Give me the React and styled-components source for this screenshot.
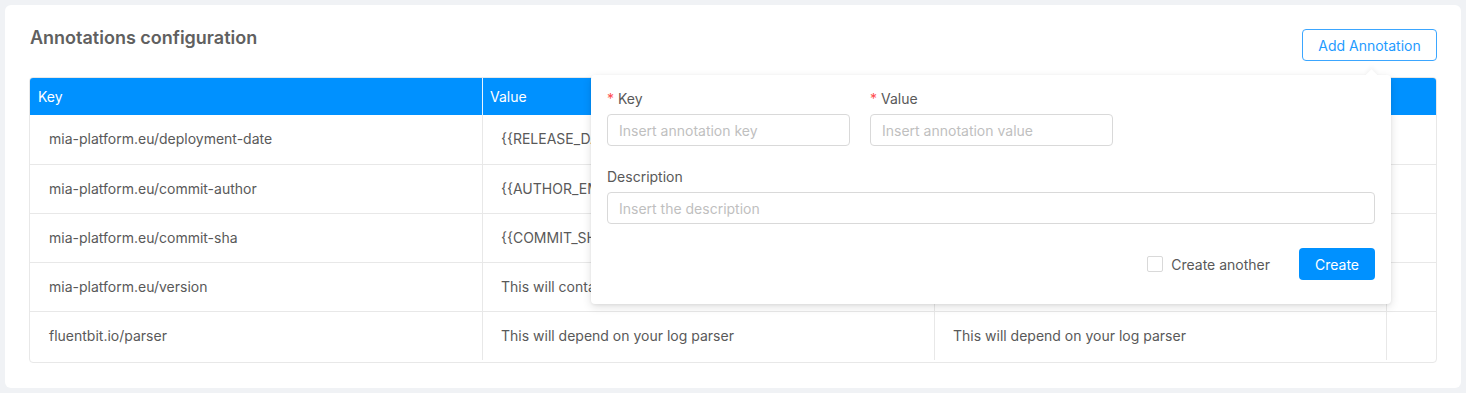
import React from "react";
import styled, { createGlobalStyle } from "styled-components";

const GlobalStyle = createGlobalStyle`
  body {
    margin: 0;
    background: #f0f2f5;
    font-family: "Inter", "Noto Sans", sans-serif;
    font-size: 14px;
    color: #595959;
  }
  * { box-sizing: border-box; }
`;

const rows = [
  { key: "mia-platform.eu/deployment-date", value: "{{RELEASE_DATE}}", desc: "" },
  { key: "mia-platform.eu/commit-author", value: "{{AUTHOR_EMAIL}}", desc: "" },
  { key: "mia-platform.eu/commit-sha", value: "{{COMMIT_SHA}}", desc: "" },
  { key: "mia-platform.eu/version", value: "This will contain the version", desc: "" },
  {
    key: "fluentbit.io/parser",
    value: "This will depend on your log parser",
    desc: "This will depend on your log parser",
  },
];

const App = () => {
  return (
    <Page>
      <GlobalStyle />
      <Card>
        <TopBar>
          <Title>Annotations configuration</Title>
          <ButtonWrap>
            <OutlineButton>Add Annotation</OutlineButton>
            <Popover>
              <Arrow />
              <FieldRow>
                <Field>
                  <Label>
                    <Req>*</Req>Key
                  </Label>
                  <Input placeholder="Insert annotation key" />
                </Field>
                <Field>
                  <Label>
                    <Req>*</Req>Value
                  </Label>
                  <Input placeholder="Insert annotation value" />
                </Field>
              </FieldRow>
              <Field $wide>
                <Label>Description</Label>
                <Input placeholder="Insert the description" />
              </Field>
              <Footer>
                <CheckLabel>
                  <Box />
                  Create another
                </CheckLabel>
                <PrimaryButton>Create</PrimaryButton>
              </Footer>
            </Popover>
          </ButtonWrap>
        </TopBar>
        <Table>
          <HeadRow>
            <HeadCell>Key</HeadCell>
            <HeadCell>Value</HeadCell>
            <HeadCell>Description</HeadCell>
            <HeadCell />
          </HeadRow>
          {rows.map((r) => (
            <BodyRow key={r.key}>
              <Cell>{r.key}</Cell>
              <Cell>{r.value}</Cell>
              <Cell>{r.desc}</Cell>
              <Cell />
            </BodyRow>
          ))}
        </Table>
      </Card>
    </Page>
  );
};

const Page = styled.div`
  padding: 5px;
  width: 1466px;
  height: 393px;
`;

const Card = styled.div`
  background: #fff;
  border-radius: 6px;
  padding: 24px 24px 0 24px;
  height: 383px;
`;

const TopBar = styled.div`
  display: flex;
  justify-content: space-between;
  align-items: flex-start;
  margin-bottom: 16px;
  padding-left: 1px;
`;

const Title = styled.h2`
  margin: 0;
  font-size: 18px;
  font-weight: 600;
  line-height: 18px;
  color: #606060;
`;

const ButtonWrap = styled.div`
  position: relative;
`;

const OutlineButton = styled.button`
  display: block;
  height: 32px;
  width: 135px;
  padding: 0;
  border: 1px solid #3ba6ff;
  border-radius: 4px;
  background: #fff;
  color: #1f9bff;
  font-family: inherit;
  font-size: 14px;
`;

const Popover = styled.div`
  position: absolute;
  top: 46px;
  right: 46px;
  width: 800px;
  height: 229px;
  background: #fff;
  border-radius: 4px;
  box-shadow: 0 3px 10px rgba(0, 0, 0, 0.12), 0 1px 3px rgba(0, 0, 0, 0.06);
  padding: 14px 16px 16px 16px;
  z-index: 10;
`;

const Arrow = styled.div`
  position: absolute;
  top: -4px;
  right: 15px;
  width: 9px;
  height: 9px;
  background: #fff;
  transform: rotate(45deg);
  box-shadow: -2px -2px 4px rgba(0, 0, 0, 0.04);
`;

const FieldRow = styled.div`
  display: flex;
  gap: 20px;
  margin-bottom: 21px;
`;

const Field = styled.div`
  display: flex;
  flex-direction: column;
  gap: 5px;
  width: ${(p) => (p.$wide ? "100%" : "243px")};
`;

const Label = styled.label`
  font-size: 14px;
  line-height: 20px;
  color: #595959;
`;

const Req = styled.span`
  color: #ff4d4f;
  margin-right: 4px;
`;

const Input = styled.input`
  height: 32px;
  width: 100%;
  border: 1px solid #d9d9d9;
  border-radius: 4px;
  padding: 0 11px;
  font-family: inherit;
  font-size: 14px;
  color: #595959;
  outline: none;

  &::placeholder {
    color: #bfbfbf;
  }
`;

const Footer = styled.div`
  display: flex;
  justify-content: flex-end;
  align-items: center;
  gap: 29px;
  margin-top: 24px;
`;

const CheckLabel = styled.label`
  display: flex;
  align-items: center;
  gap: 8px;
  font-size: 14px;
  color: #595959;
`;

const Box = styled.span`
  width: 16px;
  height: 16px;
  border: 1px solid #d9d9d9;
  border-radius: 2px;
  background: #fff;
`;

const PrimaryButton = styled.button`
  height: 32px;
  width: 76px;
  border: none;
  border-radius: 4px;
  background: #0091ff;
  color: #fff;
  font-family: inherit;
  font-size: 14px;
`;

const Table = styled.div`
  border: 1px solid #e8e8e8;
  border-radius: 4px;
  overflow: hidden;
  padding-bottom: 2px;
`;

const grid = `
  display: grid;
  grid-template-columns: 452px 452px 452px 1fr;
`;

const HeadRow = styled.div`
  ${grid}
  background: #0091ff;
  height: 37px;
`;

const HeadCell = styled.div`
  color: #fff;
  line-height: 37px;
  padding-left: 7px;
  border-left: 1px solid #e8f4ff;

  &:first-child {
    border-left: none;
    padding-left: 8px;
  }
`;

const BodyRow = styled.div`
  ${grid}
  height: 49px;
  border-top: 1px solid #e8e8e8;

  &:nth-child(2) {
    border-top: none;
  }
`;

const Cell = styled.div`
  padding-left: 18px;
  line-height: 48px;
  color: #595959;
  border-left: 1px solid #e8e8e8;
  white-space: nowrap;
  overflow: hidden;

  &:first-child {
    border-left: none;
    padding-left: 19px;
  }
`;

export default App;
